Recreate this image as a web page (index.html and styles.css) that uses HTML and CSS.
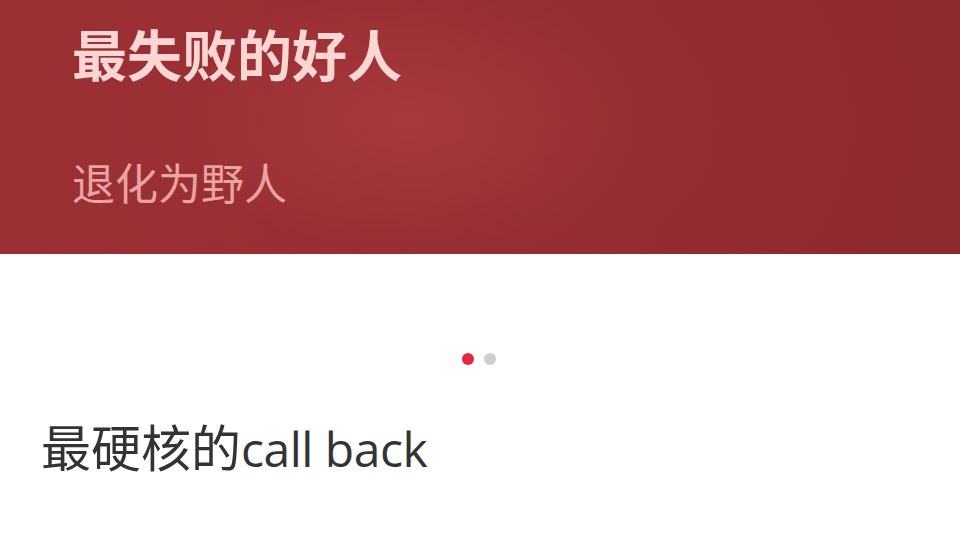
FILE: index.html
```html
<!DOCTYPE html>
<html lang="zh-CN">
<head>
<meta charset="utf-8">
<title>最失败的好人</title>
<link rel="stylesheet" href="styles.css">
</head>
<body>
<div class="page">
  <section class="banner">
    <h1 class="banner-title">最失败的好人</h1>
    <p class="banner-sub">退化为野人</p>
  </section>
  <div class="dots">
    <span class="dot active"></span>
    <span class="dot"></span>
  </div>
  <div class="list">
    <p class="item">最硬核的<span class="latin">call back</span></p>
    <p class="item">说出口的那一句话</p>
  </div>
</div>
</body>
</html>
```
FILE: styles.css
```css
html, body {
  margin: 0;
  padding: 0;
  background: #ffffff;
}
body {
  font-family: "Noto Sans CJK SC", "Noto Sans", sans-serif;
}
.page {
  width: 960px;
  height: 536px;
  overflow: hidden;
  display: flex;
  flex-direction: column;
}
.page > * {
  flex-shrink: 0;
}
.banner {
  height: 254px;
  box-sizing: border-box;
  padding: 25px 0 0 72px;
  display: flex;
  flex-direction: column;
  background:
    radial-gradient(ellipse 520px 300px at 410px 120px, rgba(176, 62, 68, 0.7) 0%, rgba(160, 52, 58, 0.3) 45%, rgba(150, 45, 50, 0) 100%),
    linear-gradient(90deg, #9a3034 0%, #942c30 40%, #8f2a2e 70%, #8d2a2d 100%);
}
.banner-title {
  margin: 0;
  font-size: 55px;
  line-height: 55px;
  font-weight: 700;
  color: #fbd6d3;
}
.banner-sub {
  margin: 80px 0 0 0;
  font-size: 43px;
  line-height: 43px;
  font-weight: 400;
  color: #e9a3a2;
}
.dots {
  margin-top: 99px;
  display: flex;
  justify-content: center;
  gap: 10px;
  padding-right: 2px;
}
.dot {
  width: 12px;
  height: 12px;
  border-radius: 50%;
  background: #cfcdd0;
}
.dot.active {
  background: #e8273c;
}
.list {
  margin-top: 55px;
  padding-left: 41px;
  display: flex;
  flex-direction: column;
  gap: 59px;
}
.item {
  margin: 0;
  font-size: 50px;
  line-height: 50px;
  color: #333333;
  white-space: nowrap;
}
.latin {
  font-family: "Open Sans", "Noto Sans CJK SC", sans-serif;
  font-size: 48px;
  letter-spacing: -0.5px;
}
```
